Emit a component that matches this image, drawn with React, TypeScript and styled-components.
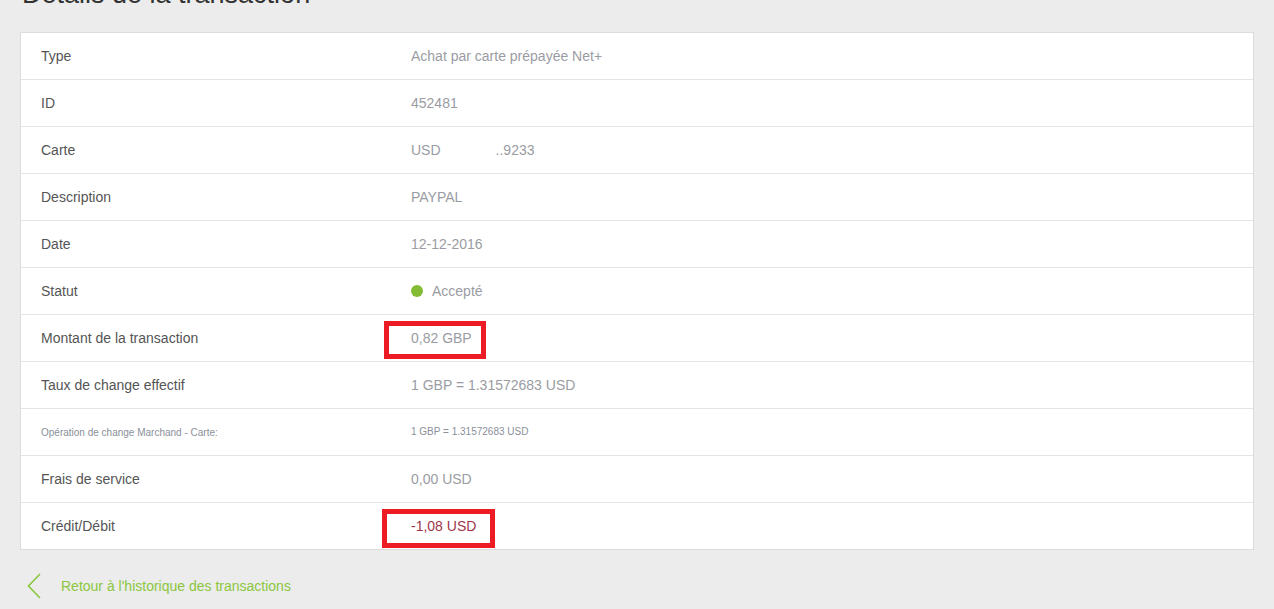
import { createGlobalStyle, styled } from 'styled-components';

const GlobalStyle = createGlobalStyle`
  html, body {
    margin: 0;
    padding: 0;
    background: #ebeceb;
    font-family: Arial, "Liberation Sans", Helvetica, sans-serif;
    overflow: hidden;
  }
`;

interface Row {
  label: string;
  value: React.ReactNode;
  small?: boolean;
  tone?: 'default' | 'debit';
  mark?: { left: number; top: number; width: number; height: number };
}

const getRows = (): Row[] => [
  { label: 'Type', value: 'Achat par carte prépayée Net+' },
  { label: 'ID', value: '452481' },
  {
    label: 'Carte',
    value: (
      <>
        USD<S.Gap />..9233
      </>
    ),
  },
  { label: 'Description', value: 'PAYPAL' },
  { label: 'Date', value: '12-12-2016' },
  {
    label: 'Statut',
    value: (
      <S.Status>
        <S.Dot />
        Accepté
      </S.Status>
    ),
  },
  {
    label: 'Montant de la transaction',
    value: '0,82 GBP',
    mark: { left: -27, top: 6, width: 102, height: 38 },
  },
  { label: 'Taux de change effectif', value: '1 GBP = 1.31572683 USD' },
  { label: 'Opération de change Marchand - Carte:', value: '1 GBP = 1.31572683 USD', small: true },
  { label: 'Frais de service', value: '0,00 USD' },
  {
    label: 'Crédit/Débit',
    value: '-1,08 USD',
    tone: 'debit',
    mark: { left: -29, top: 6, width: 113, height: 39 },
  },
];

export default function App() {
  const rows = getRows();
  return (
    <>
      <GlobalStyle />
      <S.Page>
        <S.Title>Détails de la transaction</S.Title>
        <S.Card>
          {rows.map((row) => (
            <S.Row key={row.label}>
              <S.Label $small={row.small}>{row.label}</S.Label>
              <S.Value $small={row.small} $tone={row.tone}>
                {row.value}
                {row.mark && <S.Mark style={row.mark} />}
              </S.Value>
            </S.Row>
          ))}
        </S.Card>
        <S.BackLink href="#">
          <svg width="14" height="26" viewBox="0 0 14 26">
            <polyline points="13,1 1.5,13 13,25" fill="none" stroke="#8cc63f" strokeWidth="1.6" />
          </svg>
          <span>Retour à l'historique des transactions</span>
        </S.BackLink>
      </S.Page>
    </>
  );
}

const S = {
  Page: styled.div`
    padding: 0 20px;
  `,
  Title: styled.h1`
    margin: -21px 0 22px 2px;
    font-size: 27px;
    line-height: 31px;
    font-weight: normal;
    color: #333;
  `,
  Card: styled.div`
    background: #fff;
    border: 1px solid #dcdcdc;
  `,
  Row: styled.div`
    display: grid;
    grid-template-columns: 370px 1fr;
    align-items: center;
    height: 46px;
    padding: 0 20px;
    border-bottom: 1px solid #e4e4e4;
    &:last-child {
      border-bottom: none;
    }
  `,
  Label: styled.div<{ $small?: boolean }>`
    font-size: ${(p) => (p.$small ? '10px' : '14px')};
    color: ${(p) => (p.$small ? '#8a8f99' : '#555')};
  `,
  Value: styled.div<{ $small?: boolean; $tone?: 'default' | 'debit' }>`
    position: relative;
    font-size: ${(p) => (p.$small ? '10px' : '14px')};
    color: ${(p) => (p.$tone === 'debit' ? '#9e3448' : p.$small ? '#8a8f99' : '#9a9ca3')};
    height: 46px;
    line-height: 46px;
  `,
  Gap: styled.span`
    display: inline-block;
    width: 55px;
  `,
  Status: styled.span`
    display: inline-flex;
    align-items: center;
    gap: 9px;
  `,
  Dot: styled.span`
    width: 12px;
    height: 12px;
    border-radius: 50%;
    background: #84bb34;
  `,
  Mark: styled.span`
    position: absolute;
    box-sizing: border-box;
    border: 5px solid #ed1c24;
  `,
  BackLink: styled.a`
    display: flex;
    align-items: center;
    gap: 20px;
    margin-top: 23px;
    padding-left: 7px;
    color: #8cc63f;
    font-size: 14px;
    text-decoration: none;
  `,
};
